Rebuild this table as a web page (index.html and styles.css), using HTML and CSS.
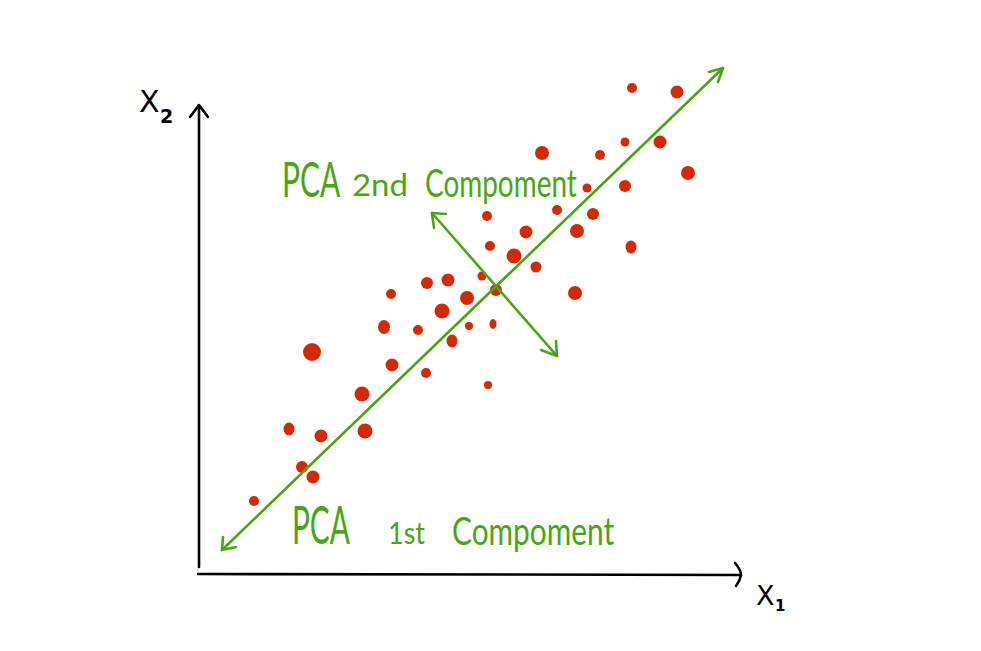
FILE: index.html
```html
<!DOCTYPE html>
<html>
<head>
<meta charset="utf-8">
<link rel="stylesheet" href="styles.css">
</head>
<body>
<div class="canvas">
<svg class="chart" width="981" height="651" viewBox="0 0 981 651" xmlns="http://www.w3.org/2000/svg">
  <g class="axis">
    <path d="M199 567 L199 106"/>
    <path d="M190 117 L199 105 L208 117"/>
    <path d="M198 574 L741 575"/>
    <path d="M735 563 Q741 570 741 575 Q740 581 736 586"/>
  </g>
  <text class="axis-label" x="139" y="112">X</text>
  <text class="axis-sub" x="160" y="123">2</text>
  <text class="axis-label small-x" x="756" y="605">X</text>
  <text class="axis-sub one" x="775" y="611">1</text>

  <g class="dots">
    <circle cx="632" cy="88" r="5"/>
    <circle cx="677" cy="92" r="6.5"/>
    <circle cx="542" cy="153" r="7"/>
    <circle cx="600" cy="155" r="5"/>
    <circle cx="625" cy="142" r="4.5"/>
    <circle cx="660" cy="142" r="6.5"/>
    <circle cx="688" cy="173" r="7"/>
    <circle cx="625" cy="186" r="6"/>
    <circle cx="587" cy="188" r="4.5"/>
    <circle cx="557" cy="210" r="5"/>
    <circle cx="593" cy="214" r="6"/>
    <circle cx="487" cy="216" r="5"/>
    <circle cx="577" cy="231" r="7"/>
    <circle cx="526" cy="232" r="6.5"/>
    <ellipse cx="631" cy="247" rx="5.5" ry="6.5"/>
    <circle cx="490" cy="246" r="5"/>
    <circle cx="514" cy="256" r="7.5"/>
    <circle cx="536" cy="267" r="5.5"/>
    <circle cx="482" cy="276" r="4.5"/>
    <circle cx="448" cy="280" r="6.5"/>
    <circle cx="427" cy="283" r="6"/>
    <circle cx="391" cy="294" r="5"/>
    <circle cx="467" cy="298" r="7"/>
    <circle cx="575" cy="293" r="7"/>
    <circle cx="496" cy="290" r="6"/>
    <circle cx="442" cy="311" r="7.5"/>
    <ellipse cx="384" cy="327" rx="6" ry="7"/>
    <circle cx="418" cy="330" r="5"/>
    <circle cx="469" cy="326" r="4"/>
    <ellipse cx="493" cy="324" rx="3.5" ry="5"/>
    <circle cx="312" cy="352" r="9"/>
    <ellipse cx="452" cy="341" rx="5.5" ry="6.5"/>
    <circle cx="392" cy="365" r="6.5"/>
    <circle cx="426" cy="373" r="5"/>
    <circle cx="488" cy="385" r="4"/>
    <circle cx="362" cy="394" r="7.5"/>
    <ellipse cx="289" cy="429" rx="5.5" ry="6.5"/>
    <circle cx="321" cy="436" r="6.5"/>
    <circle cx="365" cy="431" r="7.5"/>
    <circle cx="302" cy="467" r="6"/>
    <circle cx="313" cy="477" r="6.5"/>
    <circle cx="254" cy="501" r="5"/>
  </g>

  <g class="pc">
    <path d="M222 550 L723 68"/>
    <path d="M709 72 L723 68 L718 82"/>
    <path d="M223 537 L222 550 L236 547"/>
    <path d="M432 213 L557 356"/>
    <path d="M446 214 L432 213 L434 228"/>
    <path d="M556 341 L557 356 L541 350"/>
  </g>

  <g class="labels">
    <text class="big" transform="translate(282 197) scale(0.64 1)" textLength="91" lengthAdjust="spacingAndGlyphs">PCA</text>
    <text class="small" x="352" y="196" textLength="56" lengthAdjust="spacingAndGlyphs">2nd</text>
    <text class="mid" transform="translate(425 197) scale(0.73 1)" textLength="208" lengthAdjust="spacingAndGlyphs">Compoment</text>

    <text class="big lower" transform="translate(292 544) scale(0.59 1)" textLength="98" lengthAdjust="spacingAndGlyphs">PCA</text>
    <text class="small" x="388" y="544" textLength="37" lengthAdjust="spacingAndGlyphs">1st</text>
    <text class="mid" transform="translate(452 545) scale(0.78 1)" textLength="208" lengthAdjust="spacingAndGlyphs">Compoment</text>
  </g>
</svg>
</div>
</body>
</html>
```

FILE: styles.css
```css
html, body {
  margin: 0;
  padding: 0;
  background: #ffffff;
}

.canvas {
  width: 981px;
  height: 651px;
  overflow: hidden;
}

.chart {
  display: block;
}

.axis path {
  fill: none;
  stroke: #000000;
  stroke-width: 2.6;
  stroke-linecap: round;
  stroke-linejoin: round;
}

.axis-label {
  font-family: "DejaVu Sans", "Liberation Sans", sans-serif;
  font-size: 30px;
  fill: #000000;
}

.axis-label.small-x {
  font-size: 27px;
}

.axis-sub {
  font-family: "DejaVu Sans", "Liberation Sans", sans-serif;
  font-size: 19px;
  font-weight: bold;
  fill: #000000;
}

.axis-sub.one {
  font-size: 15px;
}

.dots circle,
.dots ellipse {
  fill: #d42a03;
}

.pc path {
  fill: none;
  stroke: #4aa515;
  stroke-width: 2.6;
  stroke-linecap: round;
  stroke-linejoin: round;
}

.labels text {
  font-family: "Lato", "Open Sans", "DejaVu Sans", sans-serif;
  font-weight: 400;
  fill: #4aa515;
}

.labels .big {
  font-size: 48px;
}

.labels .big.lower {
  font-size: 52px;
}

.labels .small {
  font-size: 30px;
}

.labels .mid {
  font-size: 38px;
}
```
